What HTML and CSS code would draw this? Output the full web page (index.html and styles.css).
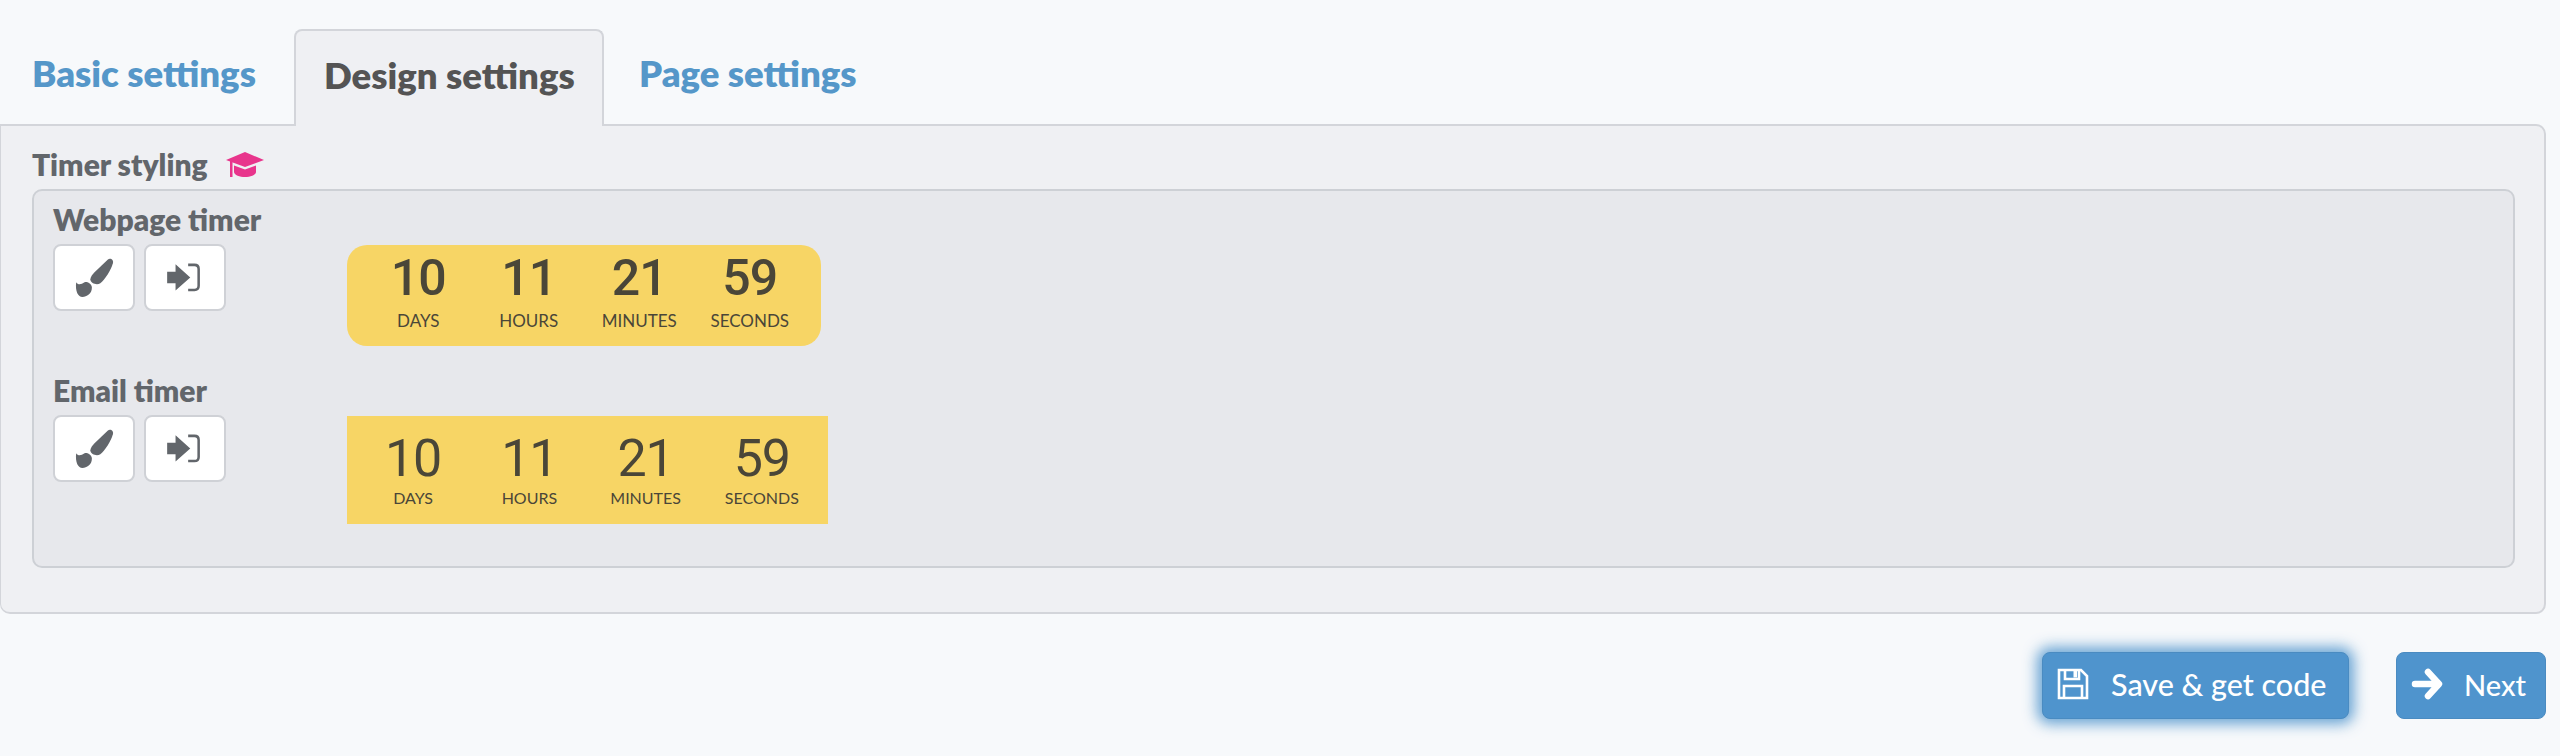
FILE: index.html
```html
<!DOCTYPE html>
<html lang="en">
<head>
<meta charset="utf-8">
<title>Timer settings</title>
<link rel="stylesheet" href="styles.css">
</head>
<body>
<nav class="tabs">
  <a class="tab">Basic settings</a>
  <a class="tab tab-active">Design settings</a>
  <a class="tab">Page settings</a>
</nav>
<main class="panel">
  <h2 class="section-title">Timer styling
    <svg class="hat" viewBox="0 0 38 25" width="38" height="25"><path d="M19 0 38 8 19 15 0 8Z"/><path d="M8 13.500 19 17.500 30 13.500V20C30 23 24 25 19 25 14 25 8 23 8 20Z"/><rect x="4" y="9" width="2.500" height="16"/></svg>
  </h2>
  <section class="box">
    <div class="timer-row row-web">
      <div class="controls">
        <h3 class="timer-name">Webpage timer</h3>
        <div class="icon-buttons">
          <button class="icon-btn"><svg viewBox="0 0 40 40" width="42" height="42"><path d="M33 2.500C35.500 .5 39 2.500 38 6 36 12.500 31 21 26 25 23 27 17 25.500 16.500 21.500 16.500 19 18.500 16.500 20.500 14.500Z"/><path d="M3 24C5 27 8 26 11 24 14 23 18 26 18 29 18 35 13 38 9 38 5 38 2 33 3 24Z"/></svg></button>
          <button class="icon-btn"><svg viewBox="0 0 40 40" width="42" height="42"><path d="M3 14H11V7L25 19.500 11 32V25H3Z"/><path class="bracket" d="M23 7.500H29Q33 7.500 33 11.500V27.500Q33 31.500 29 31.500H23"/></svg></button>
        </div>
      </div>
      <div class="timer timer-web">
        <div class="cell"><b>10</b><span>DAYS</span></div>
        <div class="cell"><b>11</b><span>HOURS</span></div>
        <div class="cell"><b>21</b><span>MINUTES</span></div>
        <div class="cell"><b>59</b><span>SECONDS</span></div>
      </div>
    </div>
    <div class="timer-row row-email">
      <div class="controls">
        <h3 class="timer-name">Email timer</h3>
        <div class="icon-buttons">
          <button class="icon-btn"><svg viewBox="0 0 40 40" width="42" height="42"><path d="M33 2.500C35.500 .5 39 2.500 38 6 36 12.500 31 21 26 25 23 27 17 25.500 16.500 21.500 16.500 19 18.500 16.500 20.500 14.500Z"/><path d="M3 24C5 27 8 26 11 24 14 23 18 26 18 29 18 35 13 38 9 38 5 38 2 33 3 24Z"/></svg></button>
          <button class="icon-btn"><svg viewBox="0 0 40 40" width="42" height="42"><path d="M3 14H11V7L25 19.500 11 32V25H3Z"/><path class="bracket" d="M23 7.500H29Q33 7.500 33 11.500V27.500Q33 31.500 29 31.500H23"/></svg></button>
        </div>
      </div>
      <div class="timer timer-email">
        <div class="cell"><b>10</b><span>DAYS</span></div>
        <div class="cell"><b>11</b><span>HOURS</span></div>
        <div class="cell"><b>21</b><span>MINUTES</span></div>
        <div class="cell"><b>59</b><span>SECONDS</span></div>
      </div>
    </div>
  </section>
</main>
<footer class="actions">
  <button class="action action-save">
    <svg viewBox="0 0 32 32" width="32" height="32"><path class="line" d="M2 2H24L30 8V30H2Z"/><path class="line" d="M8 2V11H22V2"/><path class="line" d="M7 30V18H25V30"/><rect class="solid" x="16.500" y="3" width="3.500" height="6.500"/></svg>
    Save &amp; get code
  </button>
  <button class="action action-next">
    <svg viewBox="0 0 32 32" width="32" height="32"><path class="arrow" d="M4 16H27M17 4 28 16 17 28"/></svg>
    Next
  </button>
</footer>
</body>
</html>
```
FILE: styles.css
```css
* { box-sizing: border-box; }
html, body { margin: 0; height: 756px; overflow: hidden; }
body {
  background: #f7f9fb;
  font-family: "Lato", "Noto Sans", sans-serif;
  color: #62666b;
}
.tabs {
  display: flex;
  padding: 29px 0 0 0;
  height: 126px;
  position: relative;
  z-index: 1;
}
.tab {
  width: 294px;
  padding: 23px 0 0 32px;
  font-size: 36.5px;
  font-weight: 800;
  line-height: 42px;
  color: #5597c9;
}
.tab-active {
  width: 310px;
  padding-left: 28px;
  color: #545454;
  background: #eff0f3;
  border: 2px solid #d3d5da;
  border-bottom: none;
  border-radius: 8px 8px 0 0;
}
.tab:last-child { padding-left: 35px; width: auto; }
.panel {
  margin: -2px 14px 0 0;
  height: 490px;
  padding: 0 29px 0 32px;
  background: #eff0f3;
  border: 2px solid #d3d5da;
  border-left-width: 1px;
  border-radius: 0 10px 10px 10px;
}
.section-title {
  display: flex;
  align-items: center;
  gap: 18px;
  margin: 0 0 0 -1px;
  height: 63px;
  padding-top: 12px;
  font-size: 30px;
  font-weight: 800;
}
.hat { fill: #e8358c; margin-top: 2px; }
.box {
  height: 379px;
  padding: 0 0 0 19px;
  margin-left: -1px;
  background: #e7e8ec;
  border: 2px solid #cdd0d5;
  border-radius: 10px;
}
.timer-row { display: flex; padding-top: 9px; }
.row-web { height: 171px; }
.controls { width: 294px; flex: none; }
.timer-name {
  margin: 0;
  font-size: 30px;
  font-weight: 800;
  line-height: 38px;
}
.icon-buttons { display: flex; gap: 9px; margin-top: 6px; }
.icon-btn {
  width: 82px;
  height: 67px;
  padding: 0;
  display: flex;
  align-items: center;
  justify-content: center;
  background: #fff;
  border: 2px solid #cfd1d6;
  border-radius: 8px;
}
.icon-btn svg { fill: #62666b; }
.bracket { fill: none; stroke: #62666b; stroke-width: 2.4; }
.timer {
  display: flex;
  margin-top: 45px;
  background: #f7d565;
  color: #4a4638;
}
.timer-web {
  width: 474px;
  height: 101px;
  padding: 0 16px;
  border-radius: 20px;
}
.timer-email {
  width: 481px;
  height: 108px;
  padding: 0 8px;
}
.cell { flex: 1; display: flex; flex-direction: column; align-items: center; }
.cell b { font-family: "Roboto", sans-serif; letter-spacing: -1px; }
.timer-web .cell b { font-size: 50px; line-height: 50px; margin-top: 8px; font-weight: 500; }
.timer-web .cell span { font-size: 17px; line-height: 22px; margin-top: 7px; }
.timer-email .cell b { font-size: 52px; line-height: 52px; margin-top: 17px; font-weight: 400; }
.timer-email .cell span { font-size: 16px; line-height: 20px; margin-top: 3px; }
.actions {
  display: flex;
  justify-content: flex-end;
  gap: 47px;
  margin: 38px 14px 0 0;
}
.action {
  display: flex;
  align-items: center;
  height: 67px;
  padding: 0 0 3px;
  font-family: inherit;
  font-weight: 500;
  color: #fff;
  background: #4f94cd;
  border: 1px solid #4a8bc1;
  border-radius: 8px;
}
.action-save {
  width: 307px;
  padding-left: 14px;
  gap: 22px;
  font-size: 30.5px;
  box-shadow: 0 0 14px 5px rgba(79, 148, 205, .85);
}
.action-next {
  width: 150px;
  padding-left: 14px;
  gap: 21px;
  font-size: 29px;
}
.line { fill: none; stroke: #fff; stroke-width: 2.6; }
.solid { fill: #fff; }
.arrow { fill: none; stroke: #fff; stroke-width: 6.500; stroke-linecap: round; stroke-linejoin: round; }
```
